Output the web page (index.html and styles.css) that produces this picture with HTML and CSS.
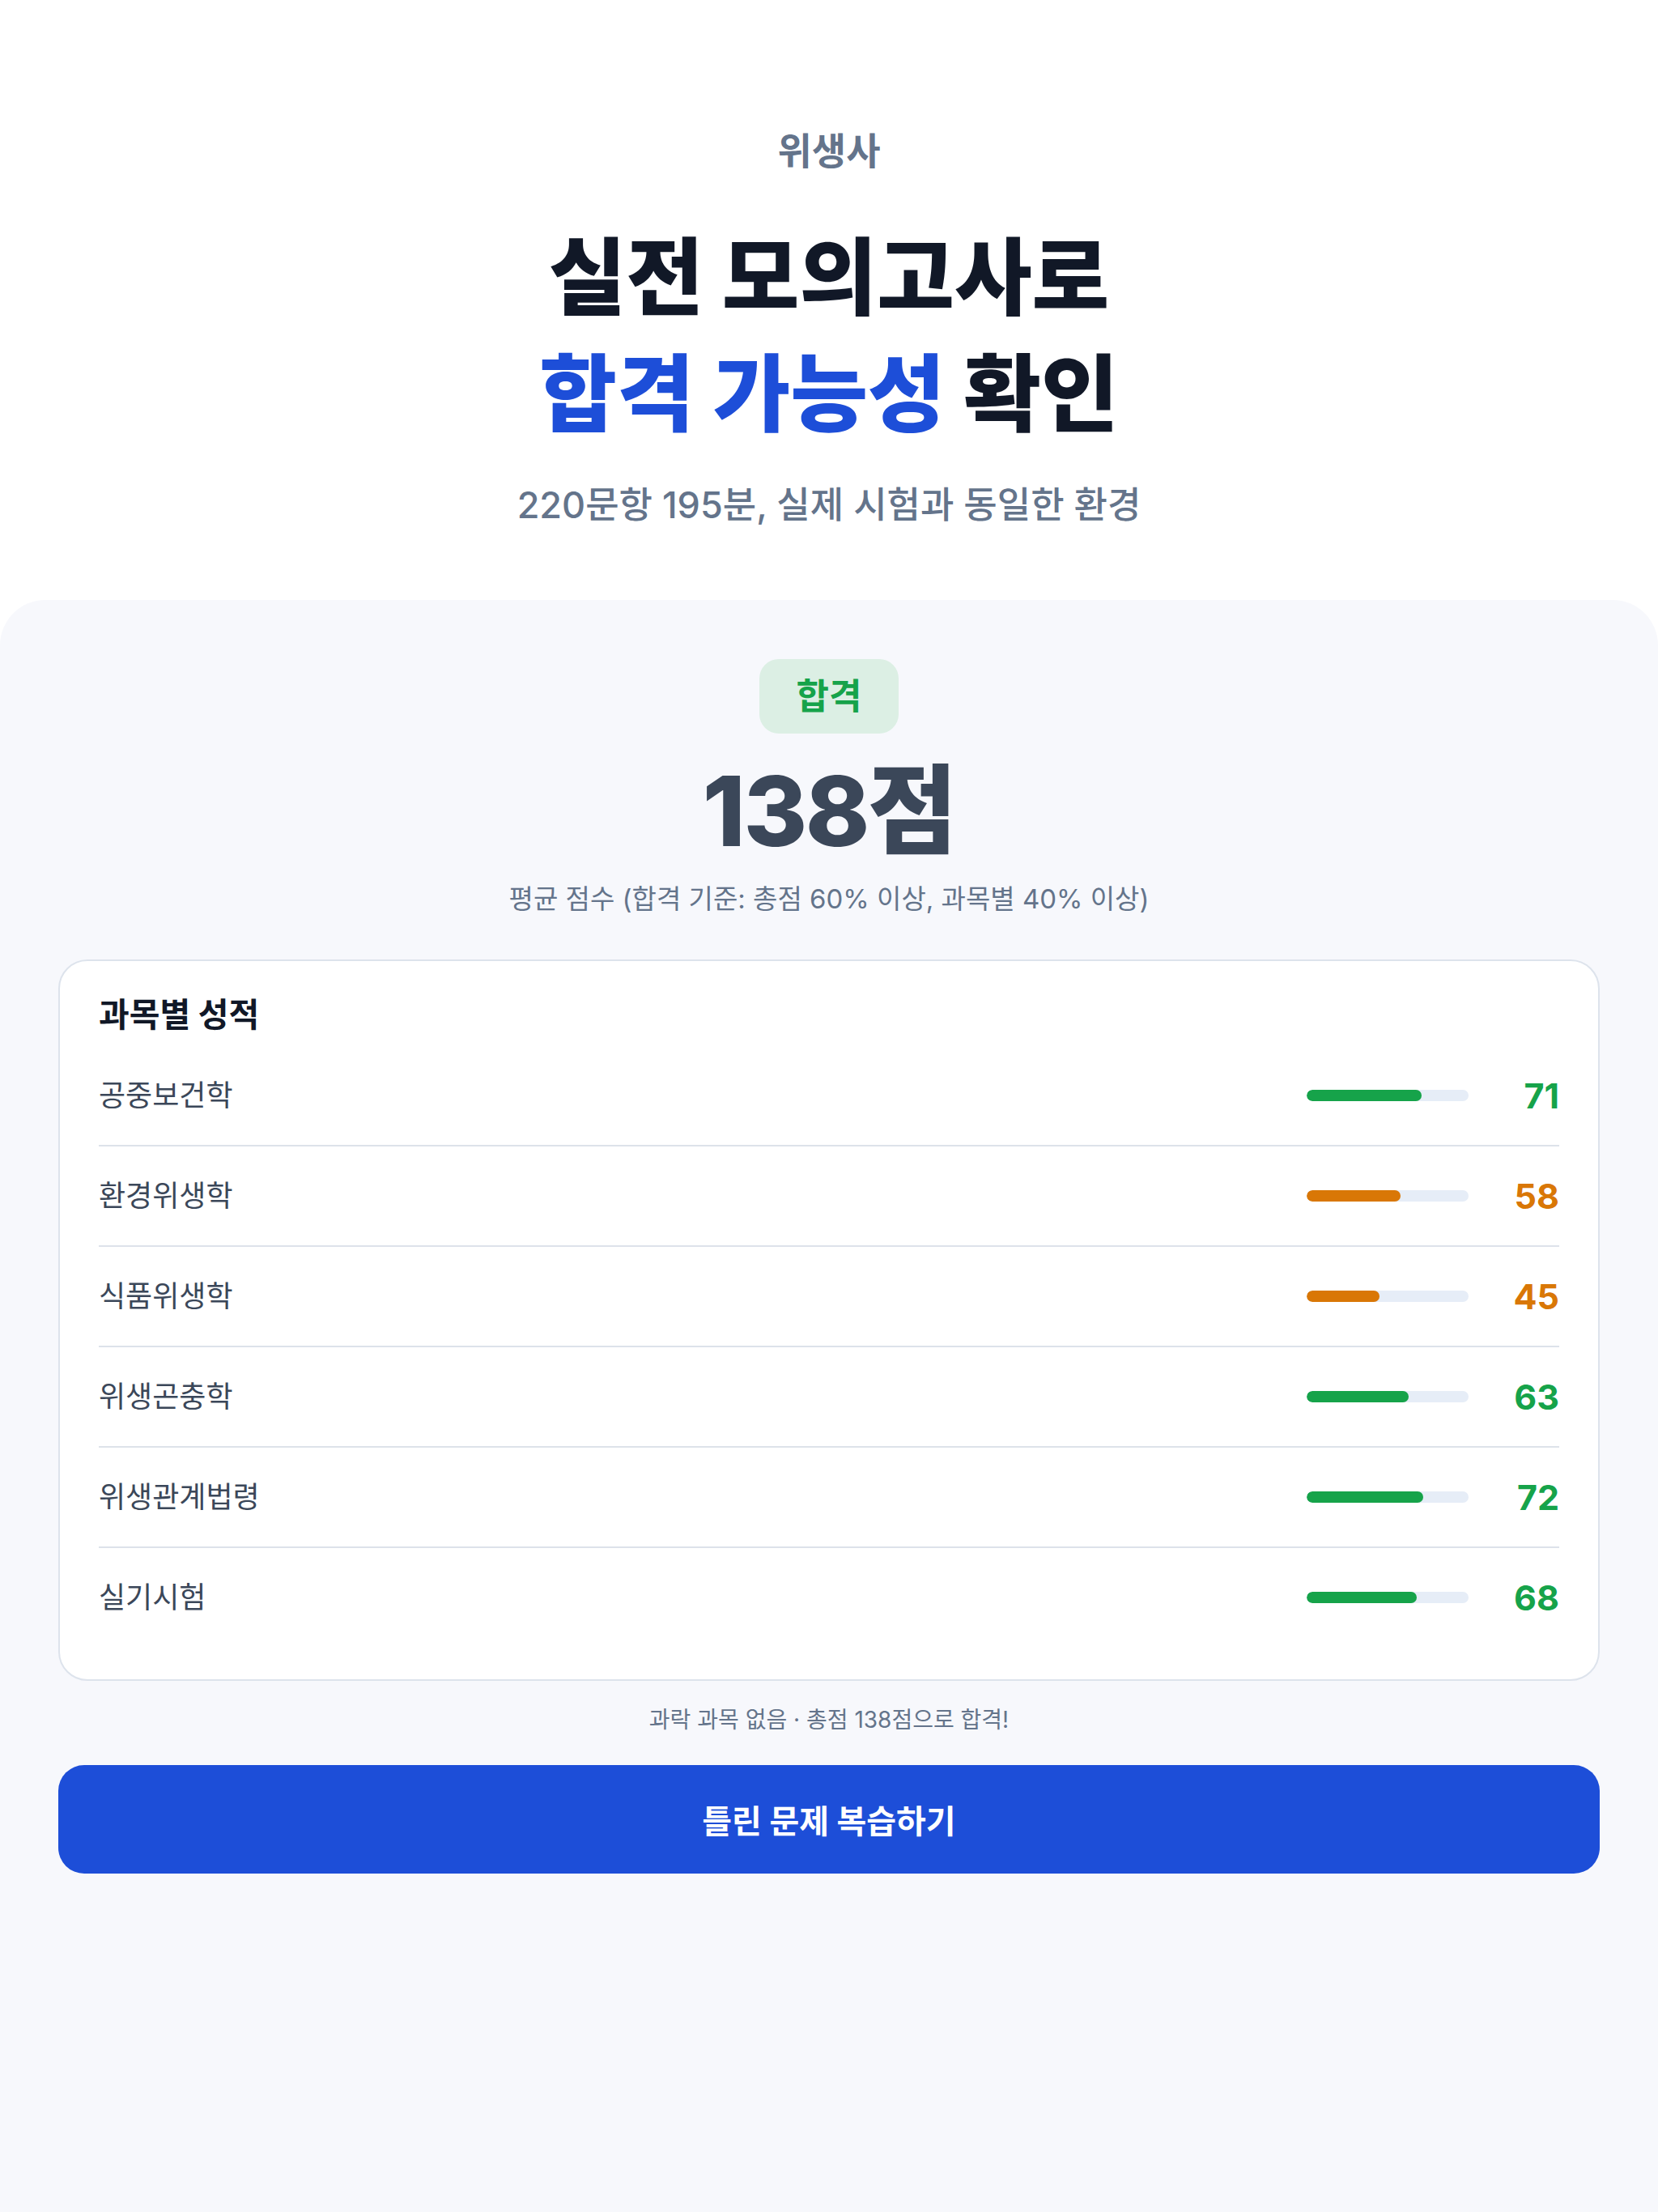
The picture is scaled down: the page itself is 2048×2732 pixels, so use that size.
FILE: index.html
```html
<!doctype html>
<html lang="ko">
	<head>
		<meta charset="utf-8">
		<title>위생사 실전 모의고사</title>
		<link rel="stylesheet" href="styles.css">
	</head>
	<body>
		<div class="page">
			<header class="hero">
				<p class="eyebrow">위생사</p>
				<h1 class="title">실전 모의고사로<br><span class="accent">합격 가능성</span> 확인</h1>
				<p class="lead">220문항 195분, 실제 시험과 동일한 환경</p>
			</header>
			<section class="panel">
				<span class="badge">합격</span>
				<p class="score">138점</p>
				<p class="caption">평균 점수 (합격 기준: 총점 60% 이상, 과목별 40% 이상)</p>
				<div class="card">
					<h2 class="card-title">과목별 성적</h2>
					<div class="row">
						<span class="subject">공중보건학</span>
						<div class="track"><div class="fill good" style="width:71%"></div></div>
						<span class="num good-text">71</span>
					</div>
					<div class="row">
						<span class="subject">환경위생학</span>
						<div class="track"><div class="fill warn" style="width:58%"></div></div>
						<span class="num warn-text">58</span>
					</div>
					<div class="row">
						<span class="subject">식품위생학</span>
						<div class="track"><div class="fill warn" style="width:45%"></div></div>
						<span class="num warn-text">45</span>
					</div>
					<div class="row">
						<span class="subject">위생곤충학</span>
						<div class="track"><div class="fill good" style="width:63%"></div></div>
						<span class="num good-text">63</span>
					</div>
					<div class="row">
						<span class="subject">위생관계법령</span>
						<div class="track"><div class="fill good" style="width:72%"></div></div>
						<span class="num good-text">72</span>
					</div>
					<div class="row">
						<span class="subject">실기시험</span>
						<div class="track"><div class="fill good" style="width:68%"></div></div>
						<span class="num good-text">68</span>
					</div>
				</div>
				<p class="note">과락 과목 없음 · 총점 138점으로 합격!</p>
				<button class="cta">틀린 문제 복습하기</button>
			</section>
		</div>
	</body>
</html>
```

FILE: styles.css
```css
*{
	margin:0;
	padding:0;
	box-sizing:border-box;
}
body{
	background-color:white;
	font-family:Inter,"Noto Sans CJK KR",sans-serif;
}
.page{
	display:flex;
	flex-direction:column;
	min-height:100vh;
}
.hero{
	display:flex;
	flex-direction:column;
	align-items:center;
	padding:155px 0 84px;
}
.eyebrow{
	font-size:46px;
	line-height:63px;
	font-weight:600;
	color:#64748b;
}
.title{
	margin-top:53px;
	font-size:104px;
	line-height:144px;
	font-weight:800;
	text-align:center;
	color:#111827;
}
.accent{
	color:#1d4ed8;
}
.lead{
	margin-top:32px;
	font-size:45px;
	line-height:66px;
	font-weight:500;
	color:#64748b;
}
.panel{
	flex:1;
	display:flex;
	flex-direction:column;
	align-items:center;
	padding:73px 72px 80px;
	background-color:#f7f8fc;
	border-radius:56px 56px 0 0;
}
.badge{
	padding:16px 46px;
	font-size:44px;
	line-height:60px;
	font-weight:700;
	color:#16a34a;
	background-color:#dcefe4;
	border-radius:24px;
}
.score{
	margin-top:24px;
	font-size:120px;
	line-height:144px;
	font-weight:800;
	letter-spacing:-0.02em;
	color:#3b4759;
}
.caption{
	margin-top:12px;
	font-size:33px;
	line-height:48px;
	color:#64748b;
}
.card{
	width:100%;
	margin-top:51px;
	padding:40px 48px;
	background-color:white;
	border:2px solid #dde3ec;
	border-radius:36px;
}
.card-title{
	margin-bottom:13px;
	font-size:41px;
	line-height:52px;
	font-weight:700;
	color:#111827;
}
.row{
	display:flex;
	align-items:center;
	padding:40px 0;
	border-bottom:2px solid #dde2ea;
}
.row:last-child{
	border-bottom:none;
}
.subject{
	flex:1;
	font-size:36px;
	line-height:42px;
	color:#3b4759;
}
.track{
	width:200px;
	height:14px;
	background-color:#e6edf7;
	border-radius:7px;
	overflow:hidden;
}
.fill{
	height:100%;
	border-radius:7px;
}
.good{
	background-color:#16a34a;
}
.warn{
	background-color:#d97706;
}
.num{
	width:80px;
	margin-left:32px;
	text-align:right;
	font-size:43px;
	line-height:42px;
	font-weight:700;
}
.good-text{
	color:#16a34a;
}
.warn-text{
	color:#d97706;
}
.note{
	margin-top:28px;
	font-size:28px;
	line-height:40px;
	color:#64748b;
}
.cta{
	width:100%;
	height:134px;
	margin-top:36px;
	font-family:inherit;
	font-size:40px;
	font-weight:700;
	color:white;
	background-color:#1d4ed8;
	border:none;
	border-radius:32px;
}
```
